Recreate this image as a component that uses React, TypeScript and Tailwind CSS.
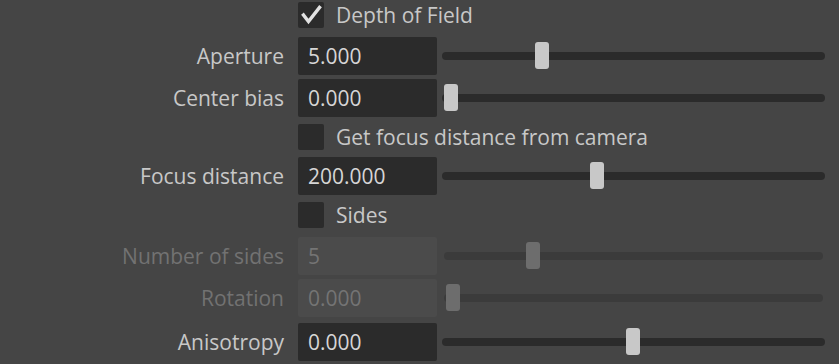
import React from "react";

type Row =
  | { kind: "check"; label: string; checked: boolean; mt: string; h: string }
  | { kind: "num"; label: string; value: string; thumb: number; disabled?: boolean; mt: string };

const rows: Row[] = [
  { kind: "check", label: "Depth of Field", checked: true, mt: "mt-0", h: "h-[30px]" },
  { kind: "num", label: "Aperture", value: "5.000", thumb: 93, mt: "mt-[7px]" },
  { kind: "num", label: "Center bias", value: "0.000", thumb: 2, mt: "mt-[4px]" },
  { kind: "check", label: "Get focus distance from camera", checked: false, mt: "mt-[4px]", h: "h-[32px]" },
  { kind: "num", label: "Focus distance", value: "200.000", thumb: 148, mt: "mt-[4px]" },
  { kind: "check", label: "Sides", checked: false, mt: "mt-[4px]", h: "h-[32px]" },
  { kind: "num", label: "Number of sides", value: "5", thumb: 82, disabled: true, mt: "mt-[6px]" },
  { kind: "num", label: "Rotation", value: "0.000", thumb: 2, disabled: true, mt: "mt-[4px]" },
  { kind: "num", label: "Anisotropy", value: "0.000", thumb: 184, mt: "mt-[6px]" },
];

function CheckRow({ label, checked, mt, h }: { label: string; checked: boolean; mt: string; h: string }) {
  return (
    <div className={`flex items-center pl-[298px] ${h} ${mt}`}>
      <div className="w-[26px] h-[26px] bg-[#2b2b2b] rounded-[2px] flex items-center justify-center">
        {checked && (
          <svg width="26" height="26" viewBox="0 0 26 26">
            <path d="M5.5 13 L10.5 19.5 L21.5 5.5" fill="none" stroke="#e2e2e2" strokeWidth="3.4" strokeLinecap="square" />
          </svg>
        )}
      </div>
      <span className="ml-[12px] text-[#c8c8c8]">{label}</span>
    </div>
  );
}

function NumRow({ label, value, thumb, disabled, mt }: { label: string; value: string; thumb: number; disabled?: boolean; mt: string }) {
  return (
    <div className={`flex items-center h-[38px] ${mt}`}>
      <div className={`w-[284px] text-right ${disabled ? "text-[#727272]" : "text-[#c8c8c8]"}`}>{label}</div>
      <div
        className={`ml-[14px] w-[139px] h-[38px] rounded-[2px] flex items-center pl-[10px] ${
          disabled ? "bg-[#4b4b4b] text-[#747474]" : "bg-[#2b2b2b] text-[#d6d6d6]"
        }`}
      >
        {value}
      </div>
      {disabled ? (
        <div className="relative flex-1 ml-[7px] mr-[16px] h-[8px] rounded-full bg-[#3b3b3b]">
          <div className="absolute top-[-10px] w-[14px] h-[27px] rounded-[3px] bg-[#6d6d6d]" style={{ left: thumb }} />
        </div>
      ) : (
        <div className="relative flex-1 ml-[5px] mr-[14px] h-[8px] rounded-full bg-[#2b2b2b]">
          <div className="absolute top-[-10px] w-[14px] h-[27px] rounded-[3px] bg-[#c8c8c8]" style={{ left: thumb }} />
        </div>
      )}
    </div>
  );
}

export default function App() {
  return (
    <div className="w-[839px] h-[364px] bg-[#454545] overflow-hidden text-[21px] leading-none font-['Open_Sans',sans-serif]">
      {rows.map((r, i) =>
        r.kind === "check" ? (
          <CheckRow key={i} label={r.label} checked={r.checked} mt={r.mt} h={r.h} />
        ) : (
          <NumRow key={i} label={r.label} value={r.value} thumb={r.thumb} disabled={r.disabled} mt={r.mt} />
        )
      )}
    </div>
  );
}
